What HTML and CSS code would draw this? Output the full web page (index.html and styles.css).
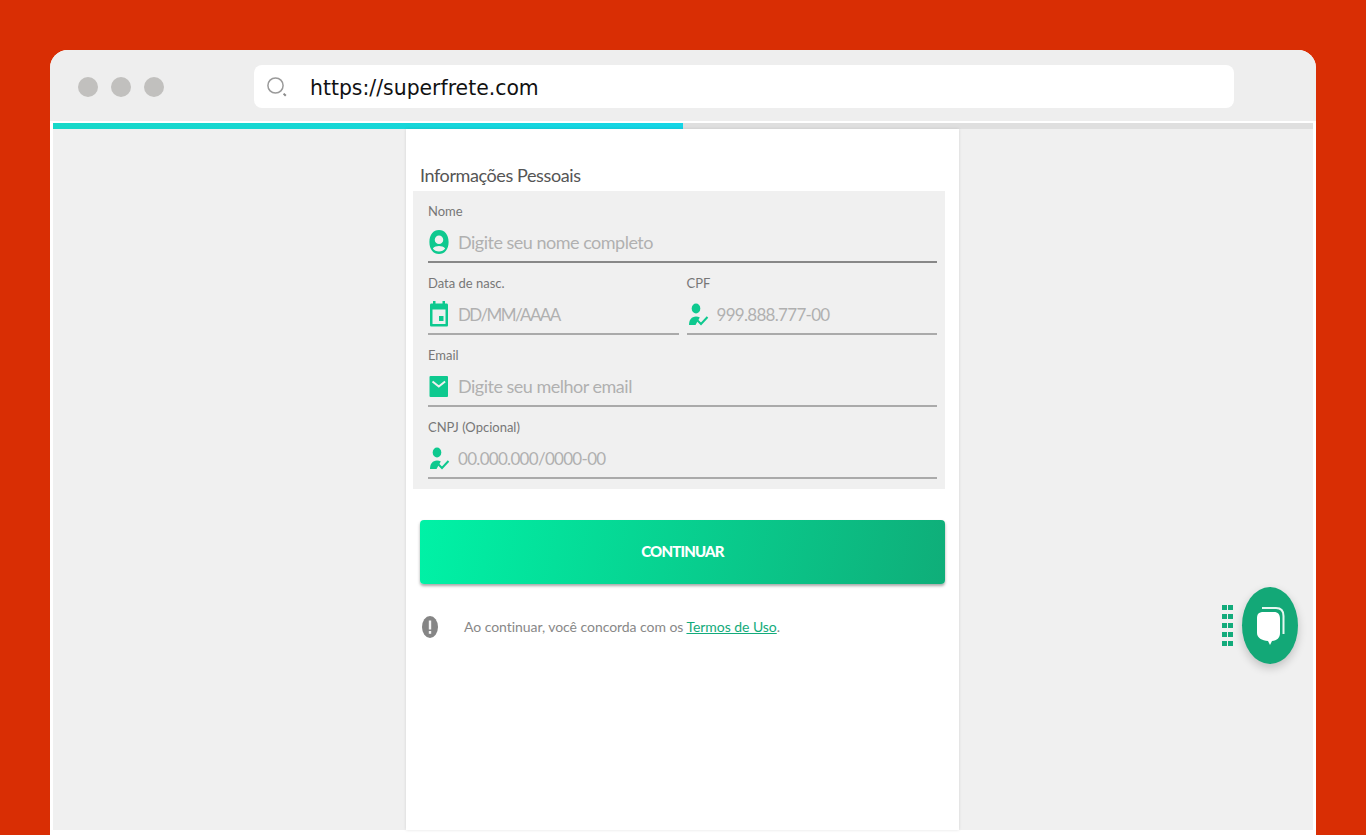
FILE: index.html
```html
<!DOCTYPE html>
<html lang="en">
<head>
    <meta charset="UTF-8">
    <title>SuperFrete</title>
    <link rel="stylesheet" href="styles.css">
</head>
<body>
    <div class="browser">
        <div class="toolbar">
            <div class="dots">
                <span class="dot"></span>
                <span class="dot"></span>
                <span class="dot"></span>
            </div>
            <div class="address">
                <svg class="search-icon" width="22" height="22" viewBox="0 0 22 22">
                    <circle cx="9.5" cy="9.5" r="7.6" fill="none" stroke="#9a9a9a" stroke-width="1.5"/>
                    <path d="M17.6 17.6l2.2 2.2" stroke="#8a8a8a" stroke-width="2" fill="none"/>
                </svg>
                <span class="url">https://superfrete.com</span>
            </div>
        </div>
        <div class="viewport">
            <div class="progress"><div class="progress-fill"></div></div>
            <div class="page">
                <div class="card">
                    <h2 class="section-title">Informações Pessoais</h2>
                    <form class="form-box">
                        <div class="field">
                            <label>Nome</label>
                            <div class="input-row dark">
                                <svg class="icon" width="22" height="26" viewBox="0 0 22 26">
                                    <path fill="#0ec98f" fill-rule="evenodd" d="M11 1c5.600 0 9.600 4.600 9.600 12S16.600 25 11 25 1.400 20.400 1.400 13 5.400 1 11 1zm0 5.500a4 4 0 1 0 0 8.500 4 4 0 0 0 0-8.500zM4.800 19.500c1.400 2 3.600 3 6.200 3s4.800-1 6.200-3c-1.500-1.600-3.700-2.400-6.200-2.400s-4.700.8-6.200 2.400z"/>
                                </svg>
                                <input type="text" placeholder="Digite seu nome completo">
                            </div>
                        </div>
                        <div class="field-pair">
                            <div class="field">
                                <label>Data de nasc.</label>
                                <div class="input-row">
                                    <svg class="icon" width="22" height="28" viewBox="0 0 22 28">
                                        <path fill="#0ec98f" fill-rule="evenodd" d="M5 1h2.500v2.500h7V1H17v2.500h1.500c1 0 1.500.6 1.500 1.500v20c0 1-.5 1.500-1.500 1.500h-15C2.500 26.500 2 26 2 25V5c0-.9.5-1.500 1.500-1.500H5V1zM4.500 9.500V24h13V9.500h-13zM11 16h4.500v5H11v-5z"/>
                                    </svg>
                                    <input class="date" type="text" placeholder="DD/MM/AAAA">
                                </div>
                            </div>
                            <div class="field">
                                <label>CPF</label>
                                <div class="input-row">
                                    <svg class="icon" width="22" height="26" viewBox="0 0 22 26">
                                        <ellipse cx="9" cy="7.500" rx="4.300" ry="5" fill="#0ec98f"/>
                                        <path fill="#0ec98f" d="M2 24c0-5 2.500-8.500 7-8.500 1.500 0 2.800.3 3.800 1l-4.300 7.500H2z"/>
                                        <path fill="none" stroke="#0ec98f" stroke-width="2" d="M10.500 19.500l3.500 3.500 6.500-7"/>
                                    </svg>
                                    <input class="digits" type="text" placeholder="999.888.777-00">
                                </div>
                            </div>
                        </div>
                        <div class="field">
                            <label>Email</label>
                            <div class="input-row">
                                <svg class="icon" width="22" height="26" viewBox="0 0 22 26">
                                    <rect x="1.500" y="3" width="18.500" height="21" rx="1" fill="#0ec98f"/>
                                    <path fill="none" stroke="#f0f0f0" stroke-width="2" d="M4.500 8.500l6.300 5 6.300-5"/>
                                </svg>
                                <input type="text" placeholder="Digite seu melhor email">
                            </div>
                        </div>
                        <div class="field">
                            <label>CNPJ (Opcional)</label>
                            <div class="input-row">
                                <svg class="icon" width="22" height="26" viewBox="0 0 22 26">
                                    <ellipse cx="9" cy="7.500" rx="4.300" ry="5" fill="#0ec98f"/>
                                    <path fill="#0ec98f" d="M2 24c0-5 2.500-8.500 7-8.500 1.500 0 2.800.3 3.800 1l-4.300 7.500H2z"/>
                                    <path fill="none" stroke="#0ec98f" stroke-width="2" d="M10.500 19.500l3.500 3.500 6.500-7"/>
                                </svg>
                                <input class="digits" type="text" placeholder="00.000.000/0000-00">
                            </div>
                        </div>
                    </form>
                    <button class="continue-btn" type="button">CONTINUAR</button>
                    <div class="terms">
                        <svg class="terms-icon" width="18" height="24" viewBox="0 0 18 24">
                            <ellipse cx="9" cy="12" rx="8" ry="11" fill="#858585"/>
                            <rect x="7.800" y="5.500" width="2.400" height="9" fill="#f4f4f4"/>
                            <rect x="7.800" y="16" width="2.400" height="2.800" fill="#f4f4f4"/>
                        </svg>
                        <p>Ao continuar, você concorda com os <a href="#">Termos de Uso</a>.</p>
                    </div>
                </div>
            </div>
        </div>
    </div>

    <div class="chat-widget">
        <div class="grip">
            <span></span><span></span><span></span><span></span><span></span>
            <span></span><span></span><span></span><span></span><span></span>
        </div>
        <div class="chat-bubble">
            <svg width="32" height="44" viewBox="0 0 32 44">
                <path fill="none" stroke="#e6f7f1" stroke-width="2" d="M8 4h14c5 0 7.500 3 7.500 8v18"/>
                <path fill="#fff" d="M7 8h13c4 0 6 2.500 6 7v14c0 5-3 7.500-8 8l-2 4-2-4c-6-.5-11-3-11-8V15c0-4.500 1-7 7-7z"/>
            </svg>
        </div>
    </div>
</body>
</html>
```

FILE: styles.css
```css
html, body {
    height: 835px;
    overflow: hidden;
}

body {
    background-color: #d92e04;
    font-family: Lato, sans-serif;
    color: #666;
    margin: 0;
    padding: 50px 50px 0;
    box-sizing: border-box;
}

.browser {
    width: 1266px;
    height: 785px;
    background: white;
    border-radius: 18px 18px 0 0;
    overflow: hidden;
    display: flex;
    flex-direction: column;
}

.toolbar {
    height: 71px;
    flex-shrink: 0;
    background-color: #eeeeee;
    display: flex;
    align-items: center;
    padding: 2px 82px 0 28px;
    box-sizing: border-box;
}

.dots {
    display: flex;
    gap: 13px;
    width: 176px;
    flex-shrink: 0;
}

.dot {
    width: 20px;
    height: 20px;
    border-radius: 50%;
    background-color: #c1c0be;
}

.address {
    flex: 1;
    height: 43px;
    background: white;
    border-radius: 8px;
    display: flex;
    align-items: center;
    padding-left: 12px;
}

.search-icon {
    margin-right: 22px;
}

.url {
    font-family: "DejaVu Sans", sans-serif;
    font-size: 20.4px;
    color: #111;
    padding-top: 2px;
}

.viewport {
    flex: 1;
    min-height: 0;
    margin: 2px 3px 5px;
    display: flex;
    flex-direction: column;
}

.progress {
    height: 6px;
    flex-shrink: 0;
    background-color: #dfdfdf;
}

.progress-fill {
    width: 50%;
    height: 100%;
    background: linear-gradient(90deg, #17d8c8, #14d5e6);
}

.page {
    flex: 1;
    min-height: 0;
    background-color: #f0f0f0;
}

.card {
    width: 553px;
    height: 100%;
    margin-left: 353px;
    background: white;
    box-shadow: 0 0 3px rgba(0, 0, 0, 0.12);
    padding-top: 32px;
    box-sizing: border-box;
}

.section-title {
    margin: 0 14px 2px;
    font-size: 18px;
    font-weight: 400;
    letter-spacing: -0.4px;
    line-height: 28px;
    color: #555;
}

.form-box {
    margin-left: 7px;
    width: 532px;
    height: 298px;
    background-color: #f0f0f0;
    padding: 8px 8px 0 15px;
    box-sizing: border-box;
}

.field {
    height: 72px;
    box-sizing: border-box;
}

.field label {
    display: block;
    font-size: 13px;
    line-height: 24px;
    color: #777;
}

.field-pair {
    display: flex;
    gap: 8px;
}

.field-pair .field {
    flex: 1;
    min-width: 0;
}

.input-row {
    height: 40px;
    display: flex;
    align-items: center;
    border-bottom: 2px solid #aaaaaa;
    box-sizing: border-box;
}

.input-row.dark {
    border-bottom-color: #888;
}

.icon {
    flex-shrink: 0;
    margin-right: 8px;
}

.input-row input {
    flex: 1;
    min-width: 0;
    border: none;
    outline: none;
    padding: 0;
    background: transparent;
    font-family: Lato, sans-serif;
    font-size: 18px;
    letter-spacing: -0.5px;
    color: #555;
}

.input-row input.digits {
    font-size: 17px;
    letter-spacing: -0.7px;
}

.input-row input.date {
    font-size: 17px;
    letter-spacing: -1.6px;
}

.input-row input::placeholder {
    color: #b0b0b0;
    opacity: 1;
}

.continue-btn {
    display: block;
    margin: 31px 0 0 14px;
    padding: 0 0 2px;
    width: 525px;
    height: 64px;
    border: none;
    border-radius: 4px;
    background: linear-gradient(100deg, #00f2a6, #0fae79);
    box-shadow: 0 2px 3px rgba(0, 0, 0, 0.35);
    color: white;
    font-family: Lato, sans-serif;
    font-size: 15px;
    font-weight: 900;
    letter-spacing: -0.8px;
    cursor: pointer;
}

.terms {
    display: flex;
    align-items: center;
    margin: 31px 0 0 15px;
}

.terms-icon {
    flex-shrink: 0;
    margin-right: 25px;
}

.terms p {
    margin: 0;
    padding-bottom: 2px;
    font-size: 14px;
    letter-spacing: -0.05px;
    color: #888;
}

.terms a {
    color: #12ab7b;
}

.chat-widget {
    position: absolute;
    left: 1222px;
    top: 587px;
    display: flex;
    align-items: center;
    gap: 9px;
}

.grip {
    display: grid;
    grid-template-columns: 5px 5px;
    gap: 4px 1px;
}

.grip span {
    height: 5px;
    width: 5px;
    background-color: #12ab7b;
}

.chat-bubble {
    width: 56px;
    height: 77px;
    border-radius: 50%;
    background-color: #13a877;
    box-shadow: 0 4px 10px rgba(0, 0, 0, 0.2);
    display: flex;
    align-items: center;
    justify-content: center;
}
```
